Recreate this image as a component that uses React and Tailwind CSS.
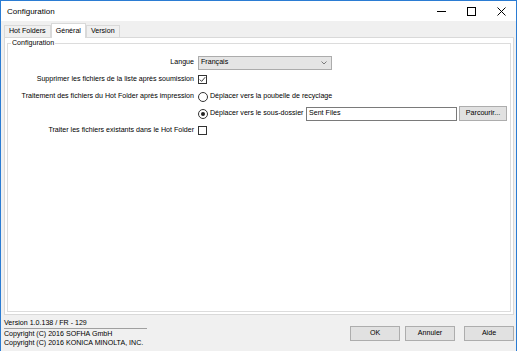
import React from 'react';

const Checkbox = ({ checked }) => (
  <div className="w-[9px] h-[9px] border border-[#333] bg-white flex items-center justify-center">
    {checked && (
      <svg width="7" height="7" viewBox="0 0 7 7">
        <path d="M0.8 3.6 L2.6 5.4 L6.2 1.2" fill="none" stroke="#222" strokeWidth="0.9" />
      </svg>
    )}
  </div>
);

const Radio = ({ checked }) => (
  <div className="w-[10px] h-[10px] rounded-full border border-[#333] bg-white flex items-center justify-center">
    {checked && <div className="w-[4px] h-[4px] rounded-full bg-[#222]" />}
  </div>
);

const Button = ({ children, className = '' }) => (
  <div className={`h-[15px] bg-[#e1e1e1] border border-[#adadad] flex items-center justify-center ${className}`}>
    {children}
  </div>
);

const tabs = ['Hot Folders', 'Général', 'Version'];

export default function App() {
  return (
    <div className="w-[517px] h-[351px] bg-[#f0f0f0] border-t border-l border-r border-[#2b7cd3] flex flex-col overflow-hidden font-['Liberation_Sans',Arial,sans-serif] text-black text-[7.1px] leading-[9px]">
      {/* title bar */}
      <div className="h-[20px] bg-white flex items-center shrink-0">
        <span className="pl-[6px] text-[8px]">Configuration</span>
        <div className="ml-auto flex h-full">
          <div className="w-[30px] flex items-center justify-center">
            <svg width="9" height="9" viewBox="0 0 9 9">
              <path d="M0 4.5 H9" stroke="#000" strokeWidth="1" />
            </svg>
          </div>
          <div className="w-[30px] flex items-center justify-center">
            <svg width="9" height="9" viewBox="0 0 9 9">
              <rect x="0.5" y="0.5" width="8" height="8" fill="none" stroke="#000" strokeWidth="1" />
            </svg>
          </div>
          <div className="w-[30px] flex items-center justify-center">
            <svg width="9" height="9" viewBox="0 0 9 9">
              <path d="M0.5 0.5 L8.5 8.5 M8.5 0.5 L0.5 8.5" stroke="#000" strokeWidth="1" />
            </svg>
          </div>
        </div>
      </div>

      {/* tabs + panel */}
      <div className="flex-1 flex flex-col pl-[3px] pr-[2px]">
        <div className="h-[16px] flex items-end shrink-0">
          {tabs.map(t =>
            t === 'Général' ? (
              <div key={t} className="relative z-10 -mb-px h-[15px] px-[4px] bg-white border border-b-0 border-[#d9d9d9] flex items-center">
                {t}
              </div>
            ) : (
              <div key={t} className="h-[12px] px-[4px] bg-[#f0f0f0] border border-b-0 border-[#d9d9d9] flex items-center">
                {t}
              </div>
            )
          )}
        </div>

        <div className="h-[278px] bg-white border border-[#d9d9d9] flex flex-col px-[2px] pb-[2px]">
          <fieldset className="mt-[1px] flex-1 border border-[#dcdcdc] pt-[6px]">
            <legend className="ml-[3px] px-[1px] leading-[9px]">Configuration</legend>
            <div className="grid grid-cols-[186px_1fr] gap-x-[4px] auto-rows-[17px] items-center">
              <div className="text-right">Langue</div>
              <div className="w-[134px] h-[14px] bg-[#e5e5e5] border border-[#acacac] flex items-center pl-[2px] pr-[4px]">
                <span>Français</span>
                <svg className="ml-auto" width="6" height="4" viewBox="0 0 6 4">
                  <path d="M0.5 0.5 L3 3 L5.5 0.5" fill="none" stroke="#606060" strokeWidth="0.8" />
                </svg>
              </div>

              <div className="text-right">Supprimer les fichiers de la liste après soumission</div>
              <div className="flex"><Checkbox checked /></div>

              <div className="text-right">Traitement des fichiers du Hot Folder après impression</div>
              <div className="flex items-center gap-[2px]">
                <Radio />
                <span>Déplacer vers la poubelle de recyclage</span>
              </div>

              <div />
              <div className="flex items-center">
                <Radio checked />
                <span className="ml-[2px]">Déplacer vers le sous-dossier</span>
                <div className="ml-auto w-[151px] h-[14px] bg-white border border-[#7a7a7a] flex items-center pl-[2px]">
                  Sent Files
                </div>
                <Button className="ml-[2px] mr-[3px] w-[48px] h-[14px]">Parcourir...</Button>
              </div>

              <div className="text-right">Traiter les fichiers existants dans le Hot Folder</div>
              <div className="flex"><Checkbox /></div>
            </div>
          </fieldset>
        </div>
      </div>

      {/* footer */}
      <div className="h-[36px] shrink-0 flex pl-[3px] pr-[2px]">
        <div className="w-[143px] pt-[3px]">
          <div className="leading-[10px] border-b border-[#a0a0a0]">Version 1.0.138 / FR - 129</div>
          <div className="mt-[1px] whitespace-nowrap">Copyright (C) 2016 SOFHA GmbH</div>
          <div className="whitespace-nowrap">Copyright (C) 2016 KONICA MINOLTA, INC.</div>
        </div>
        <div className="ml-auto flex pt-[11px]">
          <Button className="w-[50px]">OK</Button>
          <Button className="ml-[5px] w-[50px]">Annuler</Button>
          <Button className="ml-[9px] w-[50px]">Aide</Button>
        </div>
      </div>
    </div>
  );
}
